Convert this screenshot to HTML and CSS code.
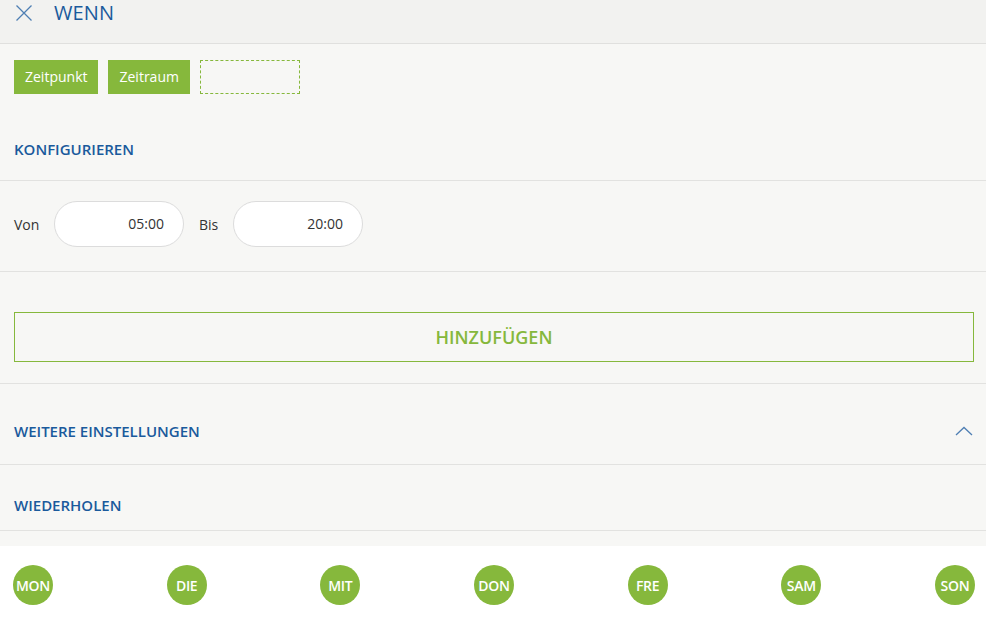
FILE: index.html
```html
<!DOCTYPE html>
<html lang="de">
<head>
<meta charset="utf-8">
<link rel="stylesheet" href="styles.css">
</head>
<body>
<div class="page">
  <header class="header">
    <svg class="close" width="18" height="18" viewBox="0 0 18 18"><path d="M1.5 1.5 L16.5 16.5 M16.5 1.5 L1.5 16.5" stroke="#4f7fb3" stroke-width="1.3" fill="none"/></svg>
    <span class="title">WENN</span>
  </header>
  <div class="tabs">
    <span class="tab">Zeitpunkt</span>
    <span class="tab">Zeitraum</span>
    <span class="tab-empty"></span>
  </div>
  <div class="section-title konf">KONFIGURIEREN</div>
  <div class="time-row">
    <span class="lbl">Von</span>
    <div class="time-input">05:00</div>
    <span class="lbl bis">Bis</span>
    <div class="time-input">20:00</div>
  </div>
  <div class="add-wrap">
    <div class="add-btn">HINZUFÜGEN</div>
  </div>
  <div class="section-title more">
    <span>WEITERE EINSTELLUNGEN</span>
    <svg width="18" height="10" viewBox="0 0 18 10"><path d="M1 9 L9 1.5 L17 9" stroke="#4f7fb3" stroke-width="1.3" fill="none"/></svg>
  </div>
  <div class="section-title rep">WIEDERHOLEN</div>
  <div class="spacer"></div>
  <div class="days">
    <span class="day">MON</span>
    <span class="day">DIE</span>
    <span class="day">MIT</span>
    <span class="day">DON</span>
    <span class="day">FRE</span>
    <span class="day">SAM</span>
    <span class="day">SON</span>
  </div>
</div>
</body>
</html>
```
FILE: styles.css
```css
* { box-sizing: border-box; }
html, body { margin: 0; padding: 0; }
body {
  font-family: "Open Sans", "Liberation Sans", sans-serif;
  background: #f7f7f5;
  width: 986px;
  height: 619px;
  overflow: hidden;
}
.page { display: flex; flex-direction: column; }
.header {
  height: 44px;
  background: #f2f2f0;
  border-bottom: 1px solid #e0e0de;
  display: flex;
  align-items: flex-start;
  padding: 3px 0 0 15px;
}
.close { margin-top: 1px; }
.title {
  margin-left: 21px;
  font-size: 20px;
  line-height: 20px;
  color: #1a5a9c;
  letter-spacing: 0.1px;
}
.tabs {
  display: flex;
  gap: 10px;
  padding: 16px 14px 0;
  height: 50px;
}
.tab {
  height: 34px;
  background: #86b83c;
  color: #fff;
  font-size: 14px;
  line-height: 34px;
  padding: 0 11px;
}
.tab-empty {
  width: 100px;
  height: 34px;
  border: 1px dashed #86b83c;
}
.section-title {
  font-size: 15px;
  line-height: 20px;
  font-weight: 600;
  color: #1a5a9c;
  padding: 0 14px;
  border-bottom: 1px solid #e2e2e0;
}
.konf { height: 87px; padding-top: 45px; }
.time-row {
  display: flex;
  align-items: center;
  height: 91px;
  padding: 0 14px 4px;
  border-bottom: 1px solid #e2e2e0;
  font-size: 14px;
  color: #333;
}
.lbl { width: 40px; }
.lbl.bis { width: 34px; margin-left: 15px; }
.time-input {
  width: 130px;
  height: 46px;
  border-radius: 23px;
  background: #fff;
  border: 1px solid #dcdcdc;
  text-align: right;
  line-height: 44px;
  padding-right: 19px;
  color: #333;
}
.add-wrap {
  height: 112px;
  padding: 40px 12px 0 14px;
  border-bottom: 1px solid #e2e2e0;
}
.add-btn {
  height: 50px;
  border: 1px solid #86b83c;
  color: #86b83c;
  font-size: 18px;
  font-weight: 600;
  text-align: center;
  line-height: 48px;
}
.more {
  height: 81px;
  display: flex;
  justify-content: space-between;
  align-items: center;
  padding-top: 14px;
  padding-right: 13px;
}
.rep { height: 66px; padding-top: 30px; }
.spacer { height: 15px; }
.days {
  background: #fff;
  height: 80px;
  display: flex;
  justify-content: space-between;
  align-items: flex-start;
  padding: 19px 11px 0 13px;
}
.day {
  width: 40px;
  height: 40px;
  border-radius: 50%;
  background: #86b83c;
  color: #fff;
  font-size: 14px;
  font-weight: 600;
  display: flex;
  align-items: center;
  justify-content: center;
  letter-spacing: -0.3px;
}
```
